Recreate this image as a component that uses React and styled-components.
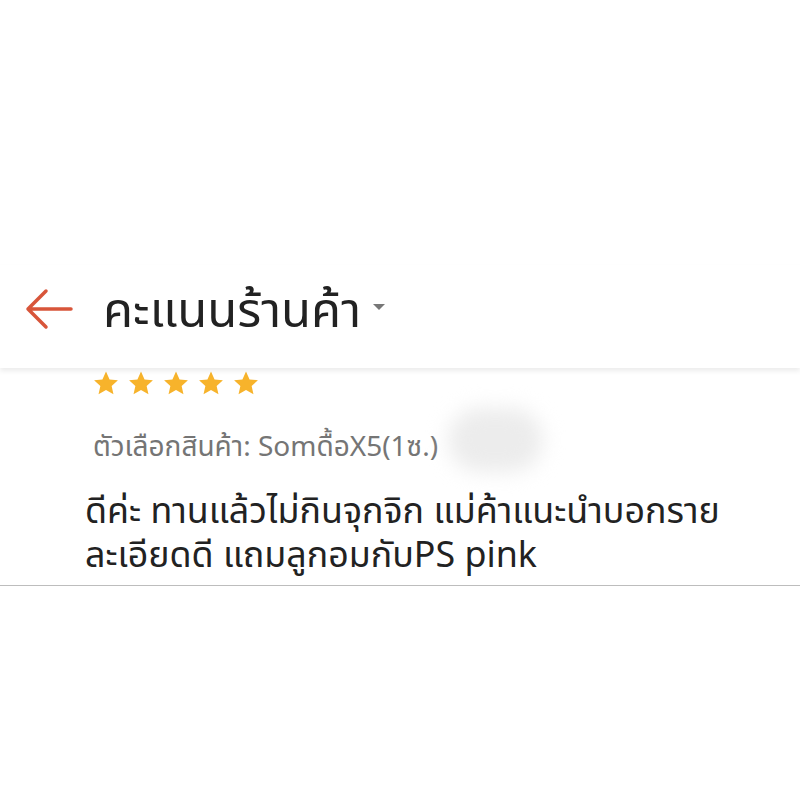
import styled, { createGlobalStyle } from "styled-components";

const Global = createGlobalStyle`
  html, body { margin: 0; padding: 0; background: #fff; }
  body { font-family: "Noto Sans", "Noto Sans Thai", "DejaVu Sans", sans-serif; }
`;

const Page = styled.div`
  width: 800px;
  height: 800px;
  background: #fff;
  display: flex;
  flex-direction: column;
  padding-top: 265px;
  box-sizing: border-box;
`;

const Header = styled.div`
  height: 103px;
  display: flex;
  align-items: center;
  padding-left: 24px;
  box-shadow: 0 3px 5px rgba(0, 0, 0, 0.08);
  position: relative;
  z-index: 1;
  box-sizing: border-box;
`;

const BackButton = styled.div`
  width: 50px;
  height: 44px;
  display: flex;
  align-items: center;
  margin-right: 29px;
  margin-top: -16px;
`;

const Title = styled.h1`
  margin: 0;
  font-size: 49px;
  line-height: 60px;
  font-weight: 400;
  color: #222;
  margin-top: -18px;
`;

const Caret = styled.span`
  width: 0;
  height: 0;
  border-left: 6px solid transparent;
  border-right: 6px solid transparent;
  border-top: 6px solid #777;
  margin-left: 12px;
  margin-top: -20px;
`;

const Review = styled.div`
  padding: 3px 0 0 93px;
  border-bottom: 1px solid #bdbdbd;
  padding-bottom: 10px;
`;

const Stars = styled.div`
  display: flex;
  gap: 9px;
  height: 25px;
`;

const Variant = styled.div`
  margin-top: 22px;
  font-size: 28px;
  line-height: 40px;
  color: #757575;
  display: flex;
  align-items: center;
`;

const Blur = styled.span`
  display: inline-block;
  width: 95px;
  height: 64px;
  margin-left: 10px;
  margin-top: -10px;
  border-radius: 40px;
  background: #ececec;
  filter: blur(10px);
`;

const Body = styled.p`
  margin: 15px 0 0;
  font-size: 35.8px;
  line-height: 44px;
  color: #222;
  margin-left: -8px;
`;

function Star() {
  return (
    <svg width="26" height="25" viewBox="0 0 24 23">
      <path
        d="M12 0.5l3.3 7.2 7.7.8-5.8 5.2 1.7 7.8L12 17.5l-6.9 4 1.7-7.8L1 8.5l7.7-.8z"
        fill="#f7b32b"
      />
    </svg>
  );
}

export default function App() {
  return (
    <Page>
      <Global />
      <Header>
        <BackButton>
          <svg width="50" height="44" viewBox="0 0 50 44">
            <path
              d="M47 22H4M22 4L4 22l18 18"
              fill="none"
              stroke="#d8553a"
              strokeWidth="3.5"
              strokeLinecap="round"
              strokeLinejoin="round"
            />
          </svg>
        </BackButton>
        <Title>คะแนนร้านค้า</Title>
        <Caret />
      </Header>
      <Review>
        <Stars>
          {[0, 1, 2, 3, 4].map((i) => (
            <Star key={i} />
          ))}
        </Stars>
        <Variant>
          ตัวเลือกสินค้า: Somดื้อX5(1ซ.)
          <Blur />
        </Variant>
        <Body>
          ดีค่ะ ทานแล้วไม่กินจุกจิก แม่ค้าแนะนำบอกราย
          <br />
          ละเอียดดี แถมลูกอมกับPS pink
        </Body>
      </Review>
    </Page>
  );
}
